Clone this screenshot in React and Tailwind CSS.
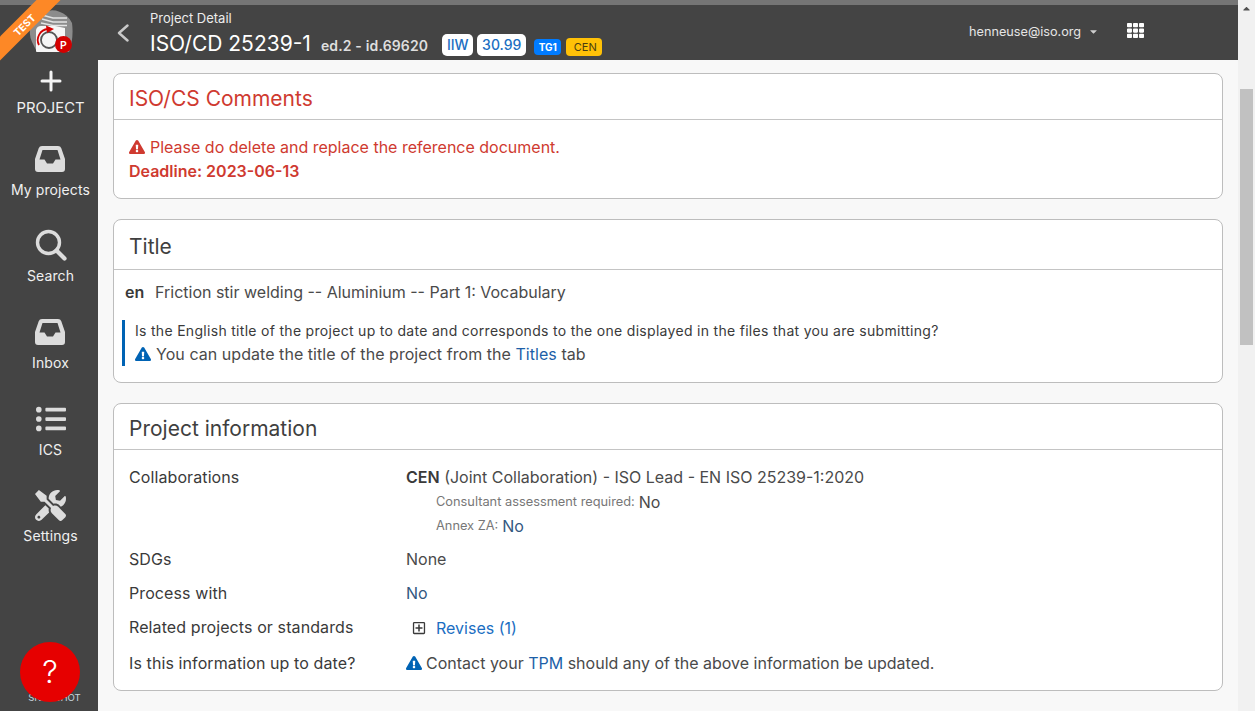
import React from "react";
import { FaListUl, FaTools, FaExclamationTriangle, FaRegPlusSquare, FaTh, FaCaretDown, FaCaretUp } from "react-icons/fa";

const F = { fontFamily: "Inter, 'Noto Sans', sans-serif" };

function Logo() {
  return (
    <svg width="46" height="44" viewBox="0 0 46 44" className="block">
      <path d="M3 32 A21 21 0 0 1 43 13 Q45 28 40 42 L8 42 Z" fill="#8c8c8c" />
      <path d="M13 5 L24 8 L38 8 M13 9 L24 12 L38 12 M12 13 L24 15.500 L38 15.500" stroke="#e4e4e4" strokeWidth="1.500" fill="none" />
      <path d="M7 20 Q8 16 12 16 L26 16 L36 18 L36 41 Q36 42 35 42 L8 42 Q7 42 7 41 Z" fill="#f6f6f6" />
      <circle cx="20" cy="30" r="8" fill="none" stroke="#555" strokeWidth="1.800" />
      <path d="M10 35 A11 11 0 0 1 19 19" fill="none" stroke="#d40000" strokeWidth="1.800" />
      <path d="M17 15.500 L25 19 L18 23 Z" fill="#d40000" />
      <circle cx="34.500" cy="34.500" r="8.500" fill="#d40000" />
      <text x="34.500" y="38.500" textAnchor="middle" fontSize="10.500" fontWeight="600" fill="#fff" fontFamily="Inter">P</text>
    </svg>
  );
}

function InboxIcon() {
  return (
    <svg width="32" height="28" viewBox="0 0 32 28">
      <path fillRule="evenodd" fill="#dcdcdc" d="M8 1 H24 Q26.500 1 27.300 3.200 L31 14 V24 Q31 27 28 27 H4 Q1 27 1 24 V14 L4.700 3.200 Q5.500 1 8 1 Z M8.500 5 L5.500 14.500 H10.500 L13 18.500 H19 L21.500 14.500 H26.500 L23.500 5 Z" />
    </svg>
  );
}

function SearchIcon() {
  return (
    <svg width="32" height="32" viewBox="0 0 32 32" fill="none" stroke="#dcdcdc" strokeLinecap="round">
      <circle cx="13.500" cy="13.500" r="11" strokeWidth="3.400" />
      <line x1="21.500" y1="21.500" x2="29.500" y2="29.500" strokeWidth="4.200" />
    </svg>
  );
}

function NavItem({ icon, label, h }) {
  return (
    <div className={`flex flex-col items-center ${h}`}>
      <div className="h-[34px] flex items-center justify-center text-[#dcdcdc]">{icon}</div>
      <div className="text-[14px] tracking-[0.1px] leading-5 mt-[4px] text-[#f0f0f0]">{label}</div>
    </div>
  );
}

function Card({ title, red, children, className = "", headH = "h-[46px]" }) {
  return (
    <section className={`bg-white border border-[#bdbdbd] rounded-[8px] ${className}`}>
      <h2 className={`${headH} flex items-center px-[15px] pt-[4px] border-b border-[#c4c4c4] text-[21px] font-normal ${red ? "text-[#cf3a30]" : "text-[#3f3f3f]"}`}>{title}</h2>
      {children}
    </section>
  );
}

function Row({ label, children, className = "" }) {
  return (
    <div className={`flex ${className}`}>
      <div className="w-[277px] shrink-0 text-[#3a3a3a] text-[16px] tracking-[0.1px] leading-6">{label}</div>
      <div className="flex-1 text-[#4a4a4a] text-[16px] leading-6">{children}</div>
    </div>
  );
}

export default function App() {
  return (
    <div style={F} className="relative w-[1255px] h-[711px] overflow-hidden bg-[#f8f8f8] flex flex-col">
      <div className="h-[5px] bg-[#757575] shrink-0 mr-[17px]"></div>
      <div className="flex flex-1 min-h-0">
        <aside className="w-[98px] shrink-0 bg-[#444444] flex flex-col items-center pl-[3px]">
          <div className="h-[55px] shrink-0"></div>
          <div className="flex flex-col items-center w-full pt-[2px]">
            <div className="flex flex-col items-center h-[80px] pt-[4px]">
              <div className="h-[30px] flex items-center justify-center">
                <svg width="22" height="22" viewBox="0 0 22 22" stroke="#f4f4f4" strokeWidth="3" strokeLinecap="round"><line x1="11" y1="2" x2="11" y2="20" /><line x1="2" y1="11" x2="20" y2="11" /></svg>
              </div>
              <div className="text-[14.800px] leading-5 mt-[2px] text-[#f0f0f0]">PROJECT</div>
            </div>
            <NavItem icon={<InboxIcon />} label="My projects" h="h-[86px]" />
            <NavItem icon={<SearchIcon />} label="Search" h="h-[87px]" />
            <NavItem icon={<InboxIcon />} label="Inbox" h="h-[87px]" />
            <NavItem icon={<FaListUl size={30} />} label="ICS" h="h-[86px]" />
            <NavItem icon={<FaTools size={31} />} label="Settings" h="h-[86px]" />
          </div>
          <div className="mt-auto mb-[7px] ml-[8px] flex flex-col items-center">
            <div className="h-[2px] w-[50px] bg-[#c8d4dc] mb-[13px]"></div>
            <div className="text-[9.600px] leading-3 text-[#c8d4dc]">SNAPSHOT</div>
          </div>
        </aside>
        <div className="flex-1 min-w-0 flex flex-col">
          <header className="h-[55px] shrink-0 bg-[#444444] flex items-start">
            <div className="w-[50px] mr-[2px] h-full flex items-center justify-center">
              <svg width="12" height="18" viewBox="0 0 12 18" fill="none" stroke="#c9c9c9" strokeWidth="2.400" strokeLinecap="round" strokeLinejoin="round"><polyline points="10.500,1.500 2,9 10.500,16.500" /></svg>
            </div>
            <div className="pt-[5px] w-[819px] shrink-0">
              <div className="text-[13px] leading-4 text-[#ececec]">Project Detail</div>
              <div className="flex items-center mt-[4px] h-[28px]">
                <span className="text-[21px] text-white">ISO/CD 25239-1</span>
                <span className="text-[14px] tracking-[0.15px] font-semibold text-[#dedede] ml-[10px] mt-[3px]">ed.2 - id.69620</span>
                <span className="ml-[14px] mt-[2px] w-[31px] text-center h-[22px] leading-[22px] rounded-[5px] bg-white text-[#1b6ec2] text-[14px] font-medium">IIW</span>
                <span className="ml-[4px] mt-[2px] w-[49px] text-center h-[22px] leading-[22px] rounded-[5px] bg-white text-[#1b6ec2] text-[14px] font-medium">30.99</span>
                <span className="ml-[8px] mt-[6px] w-[27px] text-center h-[16px] leading-[16px] rounded-[4px] bg-[#007bff] text-white text-[10px] font-bold">TG1</span>
                <span className="ml-[5px] mt-[6px] w-[36px] pl-[2px] text-center h-[18px] leading-[18px] rounded-[4px] bg-[#ffc107] text-[#4a3d10] text-[11px]">CEN</span>
              </div>
            </div>
            <div className="flex items-center h-[54px] pb-[1px]">
              <span className="text-[12.700px] text-[#e4e4e4]">henneuse@iso.org</span>
              <FaCaretDown size={11} className="ml-[7px] text-[#cfcfcf]" />
              <FaTh size={17} className="ml-[28px] mb-[3px] text-white" />
            </div>
          </header>
          <main className="flex-1 min-h-0 overflow-hidden pl-[15px] pr-[15px] pt-[13px] mr-[17px]">
            <Card title="ISO/CS Comments" red className="h-[126px]">
              <div className="px-[15px] pt-[15px] text-[#cf3a30] text-[16px]">
                <div className="flex items-center h-6"><FaExclamationTriangle size={16} className="mr-[5px]" />Please do delete and replace the reference document.</div>
                <div className="h-6 leading-6 font-semibold">Deadline: 2023-06-13</div>
              </div>
            </Card>
            <Card title="Title" headH="h-[50px]" className="h-[164px] mt-[20px]">
              <div className="pl-[11px] pt-[10px]">
                <div className="flex h-6 items-center text-[16px] text-[#4a4a4a]"><b className="font-semibold text-[#3a3a3a] w-[30px]">en</b>Friction stir welding -- Aluminium -- Part 1: Vocabulary</div>
                <div className="mt-[16px] ml-[-3px] border-l-[3px] border-[#0063b4] pl-[10px] h-[46px] pt-[1px]">
                  <div className="text-[14px] tracking-[0.3px] leading-[20px] text-[#3a3a3a]">Is the English title of the project up to date and corresponds to the one displayed in the files that you are submitting?</div>
                  <div className="flex items-center h-[26px] text-[16px] tracking-[0.05px] text-[#4a4a4a]"><FaExclamationTriangle size={16} className="text-[#0063b4] mr-[5px]" />You can update the title of the project from the&nbsp;<span className="text-[#1d5fa8]">Titles</span>&nbsp;tab</div>
                </div>
              </div>
            </Card>
            <Card title="Project information" className="h-[288px] mt-[20px]">
              <div className="px-[15px] pt-[15px]">
                <Row label="Collaborations">
                  <div><b className="font-semibold text-[#3a3a3a]">CEN</b> (Joint Collaboration) - ISO Lead - EN ISO 25239-1:2020</div>
                  <div className="pl-[30px] h-6 mt-[1px] flex items-center"><span className="text-[12.800px] text-[#777777] mr-[4px]">Consultant assessment required:</span>No</div>
                  <div className="pl-[30px] h-6 flex items-center"><span className="text-[12.800px] text-[#777777] mr-[4px]">Annex ZA:</span><span className="text-[#33587f]">No</span></div>
                </Row>
                <Row label="SDGs" className="mt-[9px]">None</Row>
                <Row label="Process with" className="mt-[10px]"><span className="text-[#33587f]">No</span></Row>
                <Row label="Related projects or standards" className="mt-[10px]">
                  <div className="flex items-center h-6 pl-[6px] pt-[1px]"><FaRegPlusSquare size={14} className="text-[#3a3a3a] mr-[10px]" /><span className="text-[#1b6ec2]">Revises (1)</span></div>
                </Row>
                <Row label="Is this information up to date?" className="mt-[12px]">
                  <div className="flex items-center h-6"><FaExclamationTriangle size={16} className="text-[#0063b4] mr-[4px]" />Contact your&nbsp;<span className="text-[#1d5fa8]">TPM</span>&nbsp;should any of the above information be updated.</div>
                </Row>
              </div>
            </Card>
          </main>
        </div>
      </div>

      {/* scrollbar */}
      <div className="absolute right-0 top-0 bottom-0 w-[17px] bg-[#f1f1f1]">
        <div className="h-[17px] flex items-center justify-center text-[#505050]"><FaCaretUp size={11} /></div>
        <div className="absolute top-[89px] left-[2px] w-[13px] h-[256px] bg-[#c1c1c1]"></div>
      </div>

      {/* logo and corner ribbon */}
      <div className="absolute left-[29px] top-[10px]"><Logo /></div>
      <div className="absolute left-0 top-0 w-[66px] h-[62px] overflow-hidden">
        <div className="absolute left-[-31px] top-[16px] w-[110px] h-[17px] rotate-[-45deg] bg-[#fd8826] flex items-center justify-center text-[10px] font-bold text-white pt-[1px]">TEST</div>
      </div>

      {/* help */}
      <div className="absolute left-[20px] top-[642px] w-[60px] h-[60px] rounded-full bg-[#e60000] flex items-center justify-center text-white text-[31px] font-light">?</div>
    </div>
  );
}
